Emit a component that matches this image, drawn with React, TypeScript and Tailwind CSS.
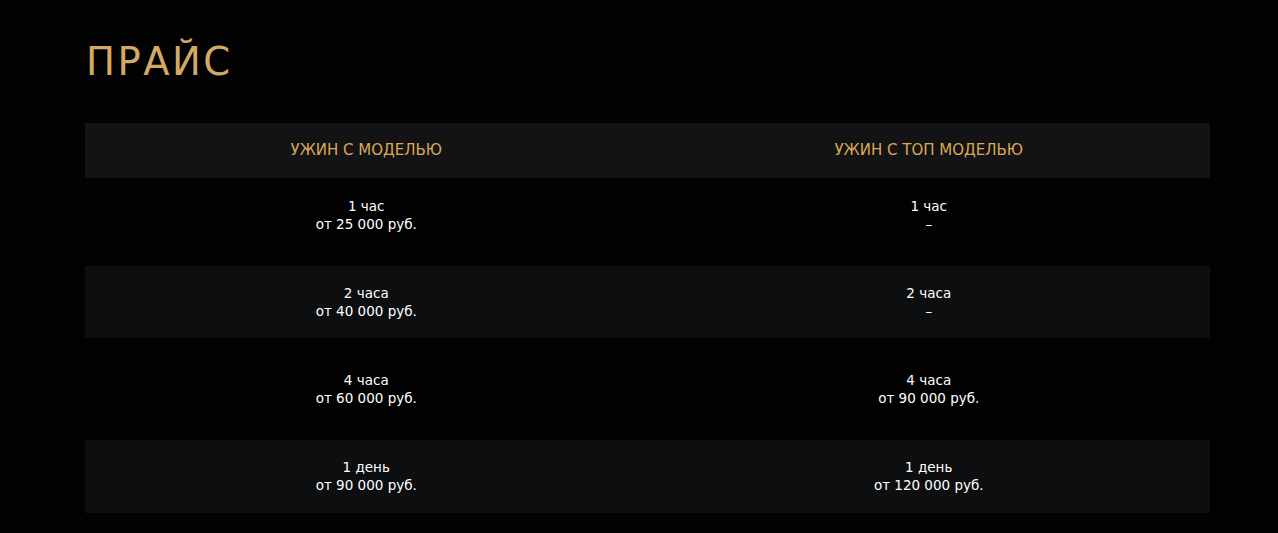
import React from 'react';

interface PriceRow { time: string; regular: string; top: string; cls: string }

const rows: PriceRow[] = [
  { time: '1 час', regular: 'от 25 000 руб.', top: '–', cls: 'h-[88px] pt-[19px] bg-[#020202]' },
  { time: '2 часа', regular: 'от 40 000 руб.', top: '–', cls: 'h-[72px] pt-[18px] bg-[#0d0e10]' },
  { time: '4 часа', regular: 'от 60 000 руб.', top: 'от 90 000 руб.', cls: 'h-[102px] pt-[33px] bg-[#020202]' },
  { time: '1 день', regular: 'от 90 000 руб.', top: 'от 120 000 руб.', cls: 'h-[73px] pt-[18px] bg-[#0d0e10]' },
];

const Cell = ({ time, price }: { time: string; price: string }) => (
  <div className="flex flex-col items-center text-[13.5px] leading-[18px] text-white">
    <span>{time}</span>
    <span>{price}</span>
  </div>
);

const App = () => {
  return (
    <div className="min-h-[533px] w-full bg-[#020202] font-['DejaVu_Sans',sans-serif]">
      <div className="px-[85px] pt-[40px] pb-[20px]">
        <h1 className="ml-[1px] text-[38.5px] leading-[44px] font-normal tracking-[2.5px] text-[#d4aa63]">ПРАЙС</h1>

        <div className="mt-[39px] w-[1125px]">
          <div className="grid h-[55px] grid-cols-2 items-center bg-[#131315]">
            <div className="text-center text-[15px] text-[#dca854]">УЖИН С МОДЕЛЬЮ</div>
            <div className="text-center text-[15px] text-[#dca854]">УЖИН С ТОП МОДЕЛЬЮ</div>
          </div>
          {rows.map(r => (
            <div key={r.time} className={`grid grid-cols-2 ${r.cls}`}>
              <Cell time={r.time} price={r.regular} />
              <Cell time={r.time} price={r.top} />
            </div>
          ))}
        </div>
      </div>
    </div>
  );
};

export default App;
